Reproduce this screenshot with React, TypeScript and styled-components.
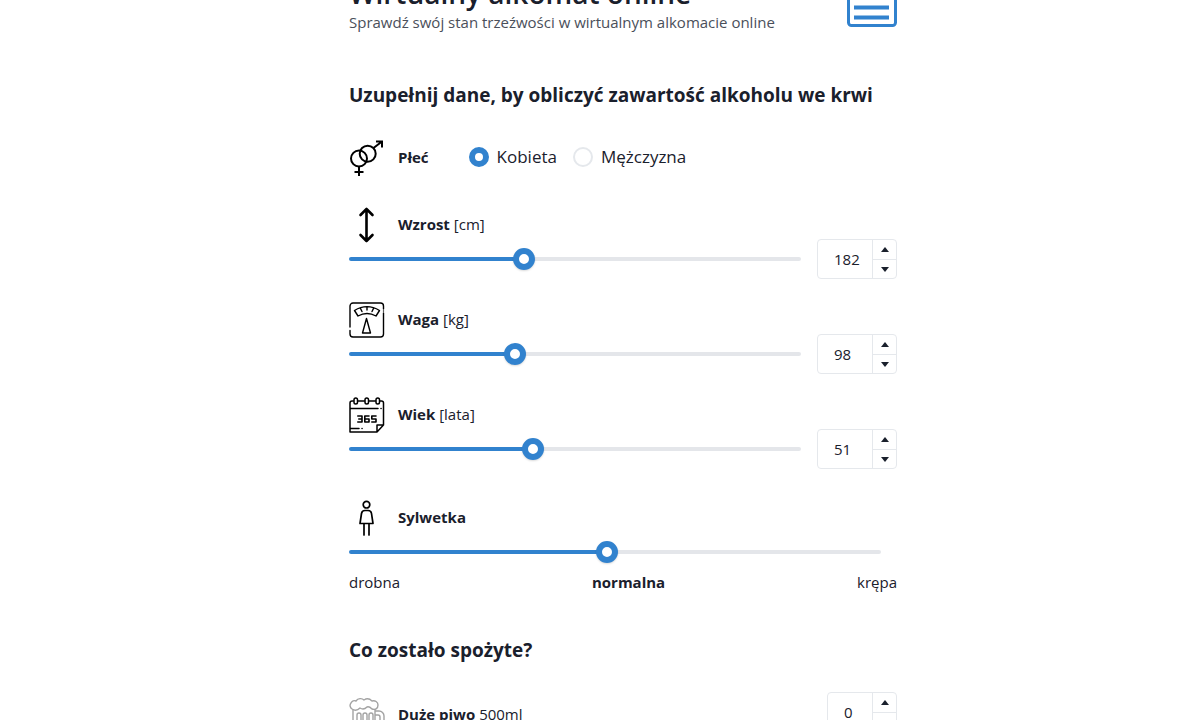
import React, { useId, useState } from "react";
import styled, { createGlobalStyle } from "styled-components";

const GlobalStyle = createGlobalStyle`
  *, *::before, *::after { box-sizing: border-box; }
  body {
    margin: 0;
    background: #fff;
    color: #1a202c;
    font-family: "Open Sans", "Noto Sans", sans-serif;
    font-size: 15px;
    line-height: 24px;
  }
`;

const Page = styled.div`
  height: 100vh;
  overflow: hidden;
  display: grid;
  grid-template-columns: minmax(0, 349fr) minmax(0, 548px) minmax(0, 303fr);
`;

const Content = styled.main`
  grid-column: 2;
  margin-top: -32px;
`;

const Header = styled.header`
  display: flex;
  justify-content: space-between;
  align-items: flex-end;
  height: 66px;
`;

const Title = styled.h1`
  margin: 0;
  font-size: 28px;
  line-height: 34px;
  font-weight: 600;
`;

const Subtitle = styled.p`
  margin: 0;
  color: #4a4f5a;
`;

const CalculatorIcon = styled.svg`
  flex: none;
  width: 50px;
  height: 64px;
  margin-bottom: 7px;
  fill: none;
  stroke: #3182ce;
`;

const SectionTitle = styled.h2`
  margin: 0;
  font-size: 19px;
  line-height: 30px;
  font-weight: 700;
`;

const Form = styled.form`
  margin-top: 46px;
`;

const GenderRow = styled.fieldset`
  display: flex;
  align-items: center;
  margin: 30px 0 31px;
  padding: 0;
  border: 0;
  min-width: 0;
`;

const Options = styled.div`
  display: flex;
  gap: 16px;
  margin-left: 40px;
  padding-bottom: 2px;
`;

const Option = styled.label`
  display: flex;
  align-items: center;
  gap: 8px;
  font-size: 17px;
`;

const Radio = styled.input`
  appearance: none;
  width: 20px;
  height: 20px;
  margin: 0;
  border: 2px solid #e5e8ec;
  border-radius: 50%;
  background: #fff;
  &:checked {
    border: 6px solid #3182ce;
  }
`;

const Caption = styled.div`
  display: flex;
  align-items: center;
  gap: 13px;
  height: 36px;
`;

const CaptionLabel = styled.label`
  padding-bottom: 2px;
`;

const Name = styled.span`
  font-weight: 700;
`;

const Icon = styled.svg<{ $muted?: boolean }>`
  flex: none;
  width: 36px;
  height: 36px;
  fill: none;
  stroke: ${(p) => (p.$muted ? "#a3a3a3" : "#000")};
  stroke-width: ${(p) => (p.$muted ? 1.4 : 1.7)};
  stroke-linecap: round;
  stroke-linejoin: round;
`;

const Field = styled.div`
  display: flex;
  align-items: flex-end;
  gap: 16px;
  margin-bottom: 23px;
`;

const Adjust = styled.div`
  flex: 1;
  min-width: 0;
  padding-bottom: 9px;
`;

const Slider = styled.input`
  appearance: none;
  display: block;
  width: 100%;
  height: 22px;
  margin: 5px 0 0;
  background: transparent;
  &::-webkit-slider-runnable-track {
    height: 4px;
    border-radius: 2px;
    background: linear-gradient(to right, #3182ce var(--fill), #e4e6ea var(--fill));
  }
  &::-webkit-slider-thumb {
    appearance: none;
    width: 22px;
    height: 22px;
    margin-top: -9px;
    border: 6px solid #3182ce;
    border-radius: 50%;
    background: #fff;
    box-shadow: 0 1px 2px rgba(0, 0, 0, 0.15);
  }
`;

const Stepper = styled.div<{ $narrow?: boolean }>`
  flex: none;
  display: grid;
  grid-template-columns: 1fr 24px;
  width: ${(p) => (p.$narrow ? 70 : 80)}px;
  height: 40px;
  border: 1px solid #e5e8ec;
  border-radius: 4px;
`;

const NumberBox = styled.input`
  min-width: 0;
  width: 100%;
  padding: 0 0 0 16px;
  border: 0;
  background: transparent;
  color: inherit;
  font: inherit;
`;

const Steps = styled.div`
  display: grid;
  grid-template-rows: 1fr 1fr;
  border-left: 1px solid #e5e8ec;
`;

const StepButton = styled.button`
  display: flex;
  align-items: center;
  justify-content: center;
  padding: 0;
  border: 0;
  background: transparent;
  & + & {
    border-top: 1px solid #e5e8ec;
  }
`;

const Arrow = styled.svg`
  width: 8px;
  height: 5px;
  fill: #1a202c;
`;

const Silhouette = styled.div`
  margin-top: 31px;
`;

const SilhouetteTrack = styled.div`
  padding-right: 16px;
`;

const Scale = styled.div`
  display: flex;
  justify-content: space-between;
  margin: 7px 0 41px;
`;

const DrinkRow = styled.div`
  display: flex;
  justify-content: space-between;
  align-items: flex-start;
  margin-top: 27px;
`;

const DrinkCaption = styled(Caption)`
  margin-top: 5px;
`;

const GenderIcon = () => (
  <Icon viewBox="0 0 36 36" aria-hidden="true">
    <g strokeWidth="2" strokeLinecap="butt" strokeLinejoin="miter">
      <circle cx="10" cy="18.5" r="8" />
      <circle cx="18.700" cy="13.700" r="8" />
      <path d="M10 26.500V36M5.500 32h9M24.500 8L33 1.500M27 1.500h6V7.500" />
    </g>
  </Icon>
);

const HeightIcon = () => (
  <Icon viewBox="0 0 36 36" aria-hidden="true">
    <path strokeWidth="2.600" d="M17.500 2v32M11.500 8l6-6 6 6M11.500 28l6 6 6-6" />
  </Icon>
);

const ScaleIcon = () => (
  <Icon viewBox="0 0 36 36" aria-hidden="true">
    <path
      strokeWidth="1.400"
      d="M34.500 7V4a3 3 0 0 0-3-3H4a3 3 0 0 0-3 3v21M1 28.500V32a3 3 0 0 0 3 3h27.500a3 3 0 0 0 3-3V11M34.500 9v.1"
    />
    <path strokeWidth="1.400" d="M5.500 8.500Q18 .800 30.500 8.500L27 14Q18 9 9 14ZM11.500 6.500l1.500 3M18 5v3M24.500 6.500l-1.500 3" />
    <path strokeWidth="1.400" d="M17.500 16.500L21.500 31h-8Z" />
  </Icon>
);

const CalendarIcon = () => (
  <Icon viewBox="0 0 36 36" aria-hidden="true">
    <g strokeWidth="1.500">
      <path d="M4.500 4H3a2 2 0 0 0-2 2v29h27l6.500-7V6a2 2 0 0 0-2-2h-1.500M9 4h6.500M20 4h6.500M28 35v-7h6.500M1 11.500h28M32 11.500h.1M1 31.500h9M13 31.500h.1" />
      <rect x="5" y="1" width="3.500" height="6" rx="1.750" />
      <rect x="16" y="1" width="3.500" height="6" rx="1.750" />
      <rect x="27" y="1" width="3.500" height="6" rx="1.750" />
    </g>
    <path strokeWidth="1.600" d="M8.800 19h4.200v6H8.800M9.800 22H13M20 19h-4.200v6H20v-3h-4.200M27 19h-4.200v3H27v3h-4.200" />
  </Icon>
);

const PersonIcon = () => (
  <Icon viewBox="0 0 36 36" aria-hidden="true">
    <circle cx="17.500" cy="4.700" r="3.300" />
    <path d="M15 23.500H11L12.500 13.500a3.500 3.500 0 0 1 3.500-3h3a3.500 3.500 0 0 1 3.500 3L24 23.500H15V35M20 23.500V35" />
  </Icon>
);

const BeerIcon = () => (
  <Icon $muted viewBox="0 0 36 36" aria-hidden="true">
    <path d="M3 12a4 4 0 0 1-1-6c1-2 3-3 5-2 2-3 6-3 8-1 3-2 6-1 8 1 3-1 6 1 6 4 0 4-3 5-6 4-2-2-3-3-5-2-2 2-4 3-7 1-3 3-5 3-8 1Z" />
    <path d="M4 13v22h22V13M26 14h4a5 5 0 0 1 5 5v10a5 5 0 0 1-5 5h-4M26 18h3a2 2 0 0 1 2 2v8a2 2 0 0 1-2 2h-3" />
    <path d="M8 35V18a2 2 0 0 1 4 0v17M14 35V18a2 2 0 0 1 4 0v17M20 35V18a2 2 0 0 1 4 0v17" />
  </Icon>
);

type NumberStepperProps = {
  id?: string;
  label: string;
  value: number;
  narrow?: boolean;
  onChange: (value: number) => void;
};

function NumberStepper({ id, label, value, narrow, onChange }: NumberStepperProps) {
  return (
    <Stepper $narrow={narrow}>
      <NumberBox
        id={id}
        type="text"
        inputMode="numeric"
        aria-label={label}
        value={value}
        onChange={(e) => onChange(Number(e.target.value) || 0)}
      />
      <Steps>
        <StepButton type="button" aria-label={`${label}: więcej`} onClick={() => onChange(value + 1)}>
          <Arrow viewBox="0 0 8 5"><path d="M4 0L8 5H0Z" /></Arrow>
        </StepButton>
        <StepButton type="button" aria-label={`${label}: mniej`} onClick={() => onChange(Math.max(0, value - 1))}>
          <Arrow viewBox="0 0 8 5"><path d="M4 5L8 0H0Z" /></Arrow>
        </StepButton>
      </Steps>
    </Stepper>
  );
}

type RangeProps = {
  id: string;
  min: number;
  max: number;
  value: number;
  onChange: (value: number) => void;
};

function Range({ id, min, max, value, onChange }: RangeProps) {
  const fill = `${((value - min) / (max - min)) * 100}%`;
  return (
    <Slider
      id={id}
      type="range"
      min={min}
      max={max}
      value={value}
      style={{ "--fill": fill } as React.CSSProperties}
      onChange={(e) => onChange(Number(e.target.value))}
    />
  );
}

type MeasureProps = {
  icon: React.ReactNode;
  name: string;
  unit: string;
  min: number;
  max: number;
  initial: number;
};

function Measure({ icon, name, unit, min, max, initial }: MeasureProps) {
  const id = useId();
  const [value, setValue] = useState(initial);
  return (
    <Field>
      <Adjust>
        <Caption>
          {icon}
          <CaptionLabel htmlFor={id}>
            <Name>{name}</Name> [{unit}]
          </CaptionLabel>
        </Caption>
        <Range id={id} min={min} max={max} value={value} onChange={setValue} />
      </Adjust>
      <NumberStepper label={name} value={value} onChange={setValue} />
    </Field>
  );
}

export default function App() {
  const [gender, setGender] = useState("Kobieta");
  const [build, setBuild] = useState(15);
  const [beers, setBeers] = useState(0);

  return (
    <>
      <GlobalStyle />
      <Page>
        <Content>
          <Header>
            <div>
              <Title>Wirtualny alkomat online</Title>
              <Subtitle>Sprawdź swój stan trzeźwości w wirtualnym alkomacie online</Subtitle>
            </div>
            <CalculatorIcon viewBox="0 0 50 64" aria-hidden="true">
              <rect x="1.500" y="1.500" width="47" height="61" rx="3" strokeWidth="3" />
              <path d="M7 14h35M7 24h35M7 34h35M7 44.500h35M7 54.500h35" strokeWidth="4" />
            </CalculatorIcon>
          </Header>
          <Form>
            <SectionTitle>Uzupełnij dane, by obliczyć zawartość alkoholu we krwi</SectionTitle>
            <GenderRow aria-labelledby="gender-name">
              <Caption>
                <GenderIcon />
                <CaptionLabel as="span" id="gender-name">
                  <Name>Płeć</Name>
                </CaptionLabel>
              </Caption>
              <Options>
                {["Kobieta", "Mężczyzna"].map((option) => (
                  <Option key={option}>
                    <Radio
                      type="radio"
                      name="gender"
                      checked={gender === option}
                      onChange={() => setGender(option)}
                    />
                    {option}
                  </Option>
                ))}
              </Options>
            </GenderRow>
            <Measure icon={<HeightIcon />} name="Wzrost" unit="cm" min={140} max={250} initial={182} />
            <Measure icon={<ScaleIcon />} name="Waga" unit="kg" min={35} max={210} initial={98} />
            <Measure icon={<CalendarIcon />} name="Wiek" unit="lata" min={18} max={100} initial={51} />
            <Silhouette>
              <Caption>
                <PersonIcon />
                <CaptionLabel htmlFor="build">
                  <Name>Sylwetka</Name>
                </CaptionLabel>
              </Caption>
              <SilhouetteTrack>
                <Range id="build" min={0} max={31} value={build} onChange={setBuild} />
              </SilhouetteTrack>
              <Scale>
                <span>drobna</span>
                <Name>normalna</Name>
                <span>krępa</span>
              </Scale>
            </Silhouette>
            <SectionTitle>Co zostało spożyte?</SectionTitle>
            <DrinkRow>
              <DrinkCaption>
                <BeerIcon />
                <CaptionLabel htmlFor="beer">
                  <Name>Duże piwo</Name> 500ml
                </CaptionLabel>
              </DrinkCaption>
              <NumberStepper id="beer" label="Duże piwo" narrow value={beers} onChange={setBeers} />
            </DrinkRow>
          </Form>
        </Content>
      </Page>
    </>
  );
}
